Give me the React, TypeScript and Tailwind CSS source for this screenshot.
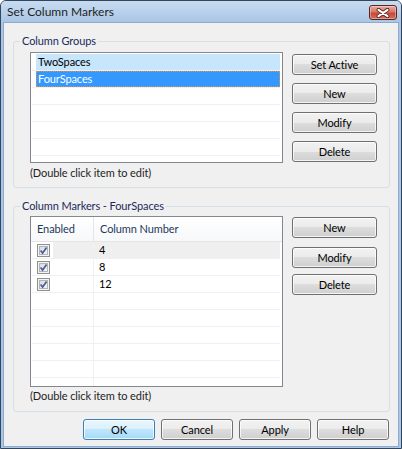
import React from "react";

function Btn({ label, def, className = "" }: { label: string; def?: boolean; className?: string }) {
  return (
    <button
      type="button"
      className={
        "flex items-center justify-center rounded-[3px] border text-[11px] leading-none text-black shadow-[inset_0_0_0_1px_rgba(255,255,255,0.75)] " +
        (def
          ? "border-[#3c7fb1] bg-[linear-gradient(to_bottom,#eaf6fd_0%,#d9f0fc_50%,#bee6fd_50%,#a7d9f5_100%)] "
          : "border-[#707070] bg-[linear-gradient(to_bottom,#f2f2f2_0%,#ebebeb_50%,#dddddd_50%,#cfcfcf_100%)] ") +
        className
      }
    >
      {label}
    </button>
  );
}

function Check() {
  return (
    <svg width="13" height="13" viewBox="0 0 13 13" className="block">
      <defs>
        <linearGradient id="cbg" x1="0" y1="0" x2="1" y2="1">
          <stop offset="0" stopColor="#d6d9de" />
          <stop offset="1" stopColor="#f7f7f7" />
        </linearGradient>
      </defs>
      <rect x="0.5" y="0.5" width="12" height="12" fill="#f4f4f4" stroke="#8e8f8f" />
      <rect x="2.5" y="2.5" width="8" height="8" fill="url(#cbg)" stroke="#b2b4b8" />
      <path d="M3.6 6.4 L5.6 9 L9.6 3.4" fill="none" stroke="#4a5f97" strokeWidth="1.7" />
    </svg>
  );
}

function Group({ title, className = "", children }: { title: string; className?: string; children: React.ReactNode }) {
  return (
    <div className={"relative ml-[9px] w-[377px] rounded-[3px] border border-[#d5dfe5] " + className}>
      <span className="absolute -top-[9px] left-[6px] bg-[#f0f0f0] px-[2px] leading-[16px] text-[#1c2a5a]">{title}</span>
      {children}
    </div>
  );
}

const groups = ["TwoSpaces", "FourSpaces", "", "", "", "", ""];
const markers = ["4", "8", "12", "", "", "", "", "", ""];

export default function App() {
  return (
    <div className="h-[449px] w-[402px] overflow-hidden rounded-t-[6px] border border-[#34465c] bg-[#a9c6e6] font-['Lato',sans-serif]">
      {/* title bar */}
      <div className="flex h-[21px] items-start justify-between bg-[linear-gradient(to_bottom,#c8dcf1,#aac6e5)] pl-[6px] pr-[4px]">
        <span className="mt-[3px] text-[12px] leading-[16px] text-[#1e1e1e]">Set Column Markers</span>
        <div className="mt-[4px] flex h-[15px] w-[28px] items-center justify-center rounded-[3px] border border-[#5b2620] bg-[linear-gradient(to_bottom,#e9ab9e_0%,#d9786a_45%,#c7483a_55%,#d2705e_100%)] shadow-[inset_0_0_0_1px_rgba(255,255,255,0.35)]">
          <svg width="14" height="10" viewBox="0 0 14 10">
            <path d="M2.5 1.8 L11.5 8.2 M11.5 1.8 L2.5 8.2" stroke="#4a1d18" strokeWidth="3.8" strokeLinecap="round" />
            <path d="M2.5 1.8 L11.5 8.2 M11.5 1.8 L2.5 8.2" stroke="#ffffff" strokeWidth="2.2" strokeLinecap="round" />
          </svg>
        </div>
      </div>

      {/* client area */}
      <div className="mx-[2px] h-[425px] border border-[#8fabcb] bg-[#f0f0f0] text-[11px] leading-[16px] tracking-[-0.1px] text-black">
        <Group title="Column Groups" className="mt-[18px] pb-[6px] pl-[16px] pr-[12px] pt-[10px]">
          <div className="flex gap-[9px]">
            <div className="h-[111px] w-[253px] overflow-hidden border border-[#828790] bg-white pt-[1px]">
              {groups.map((g, i) => (
                <div key={i} className="ml-[1px] mr-[2px] flex h-[17px] border-b border-[#f0f0f0]">
                  <div
                    className={
                      "ml-[4px] flex flex-1 items-center pl-[2px] " +
                      (i === 0
                        ? "bg-[#c8e6fb]"
                        : i === 1
                          ? "bg-[#3399ff] text-white outline-1 -outline-offset-1 outline-dotted outline-[#e0904c]"
                          : "")
                    }
                  >
                    {g}
                  </div>
                </div>
              ))}
            </div>
            <div className="flex flex-col gap-[8px] pt-[2px]">
              <Btn label="Set Active" className="h-[21px] w-[85px]" />
              <Btn label="New" className="h-[21px] w-[85px]" />
              <Btn label="Modify" className="h-[21px] w-[85px]" />
              <Btn label="Delete" className="h-[21px] w-[85px]" />
            </div>
          </div>
          <div className="mt-[2px] text-[#1e1e1e]">(Double click item to edit)</div>
        </Group>

        <Group title="Column Markers - FourSpaces" className="mt-[18px] pb-[7px] pl-[16px] pr-[12px] pt-[9px]">
          <div className="flex gap-[9px]">
            <div className="h-[171px] w-[253px] overflow-hidden border border-[#828790] bg-white">
              <div className="flex h-[25px] items-center border-b border-[#e5e5e5] bg-[linear-gradient(to_bottom,#ffffff,#f7f8fa)] text-[#1e395b]">
                <div className="flex h-full w-[63px] items-center border-r border-[#e5e5e5] pl-[6px]">Enabled</div>
                <div className="pl-[6px]">Column Number</div>
              </div>
              {markers.map((m, i) => (
                <div key={i} className="ml-[1px] mr-[2px] flex h-[17px] border-b border-[#f0f0f0]">
                  <div className="flex w-[62px] border-r border-[#f0f0f0]">
                    <div className="flex w-[21px] items-center justify-end pr-[3px]">{m && <Check />}</div>
                    <div className={"flex-1 " + (i === 0 ? "bg-[#efefef]" : "")} />
                  </div>
                  <div className={"flex flex-1 items-center pl-[5px] " + (i === 0 ? "bg-[#efefef]" : "")}>{m}</div>
                </div>
              ))}
            </div>
            <div className="flex flex-col pt-[1px]">
              <Btn label="New" className="h-[21px] w-[85px]" />
              <Btn label="Modify" className="mt-[9px] h-[21px] w-[85px]" />
              <Btn label="Delete" className="mt-[6px] h-[21px] w-[85px]" />
            </div>
          </div>
          <div className="mt-[1px] text-[#1e1e1e]">(Double click item to edit)</div>
        </Group>

        <div className="mt-[7px] flex justify-end gap-[6px] pr-[9px]">
          <Btn label="OK" def className="h-[21px] w-[72px]" />
          <Btn label="Cancel" className="h-[21px] w-[72px]" />
          <Btn label="Apply" className="h-[21px] w-[72px]" />
          <Btn label="Help" className="h-[21px] w-[72px]" />
        </div>
      </div>
    </div>
  );
}
